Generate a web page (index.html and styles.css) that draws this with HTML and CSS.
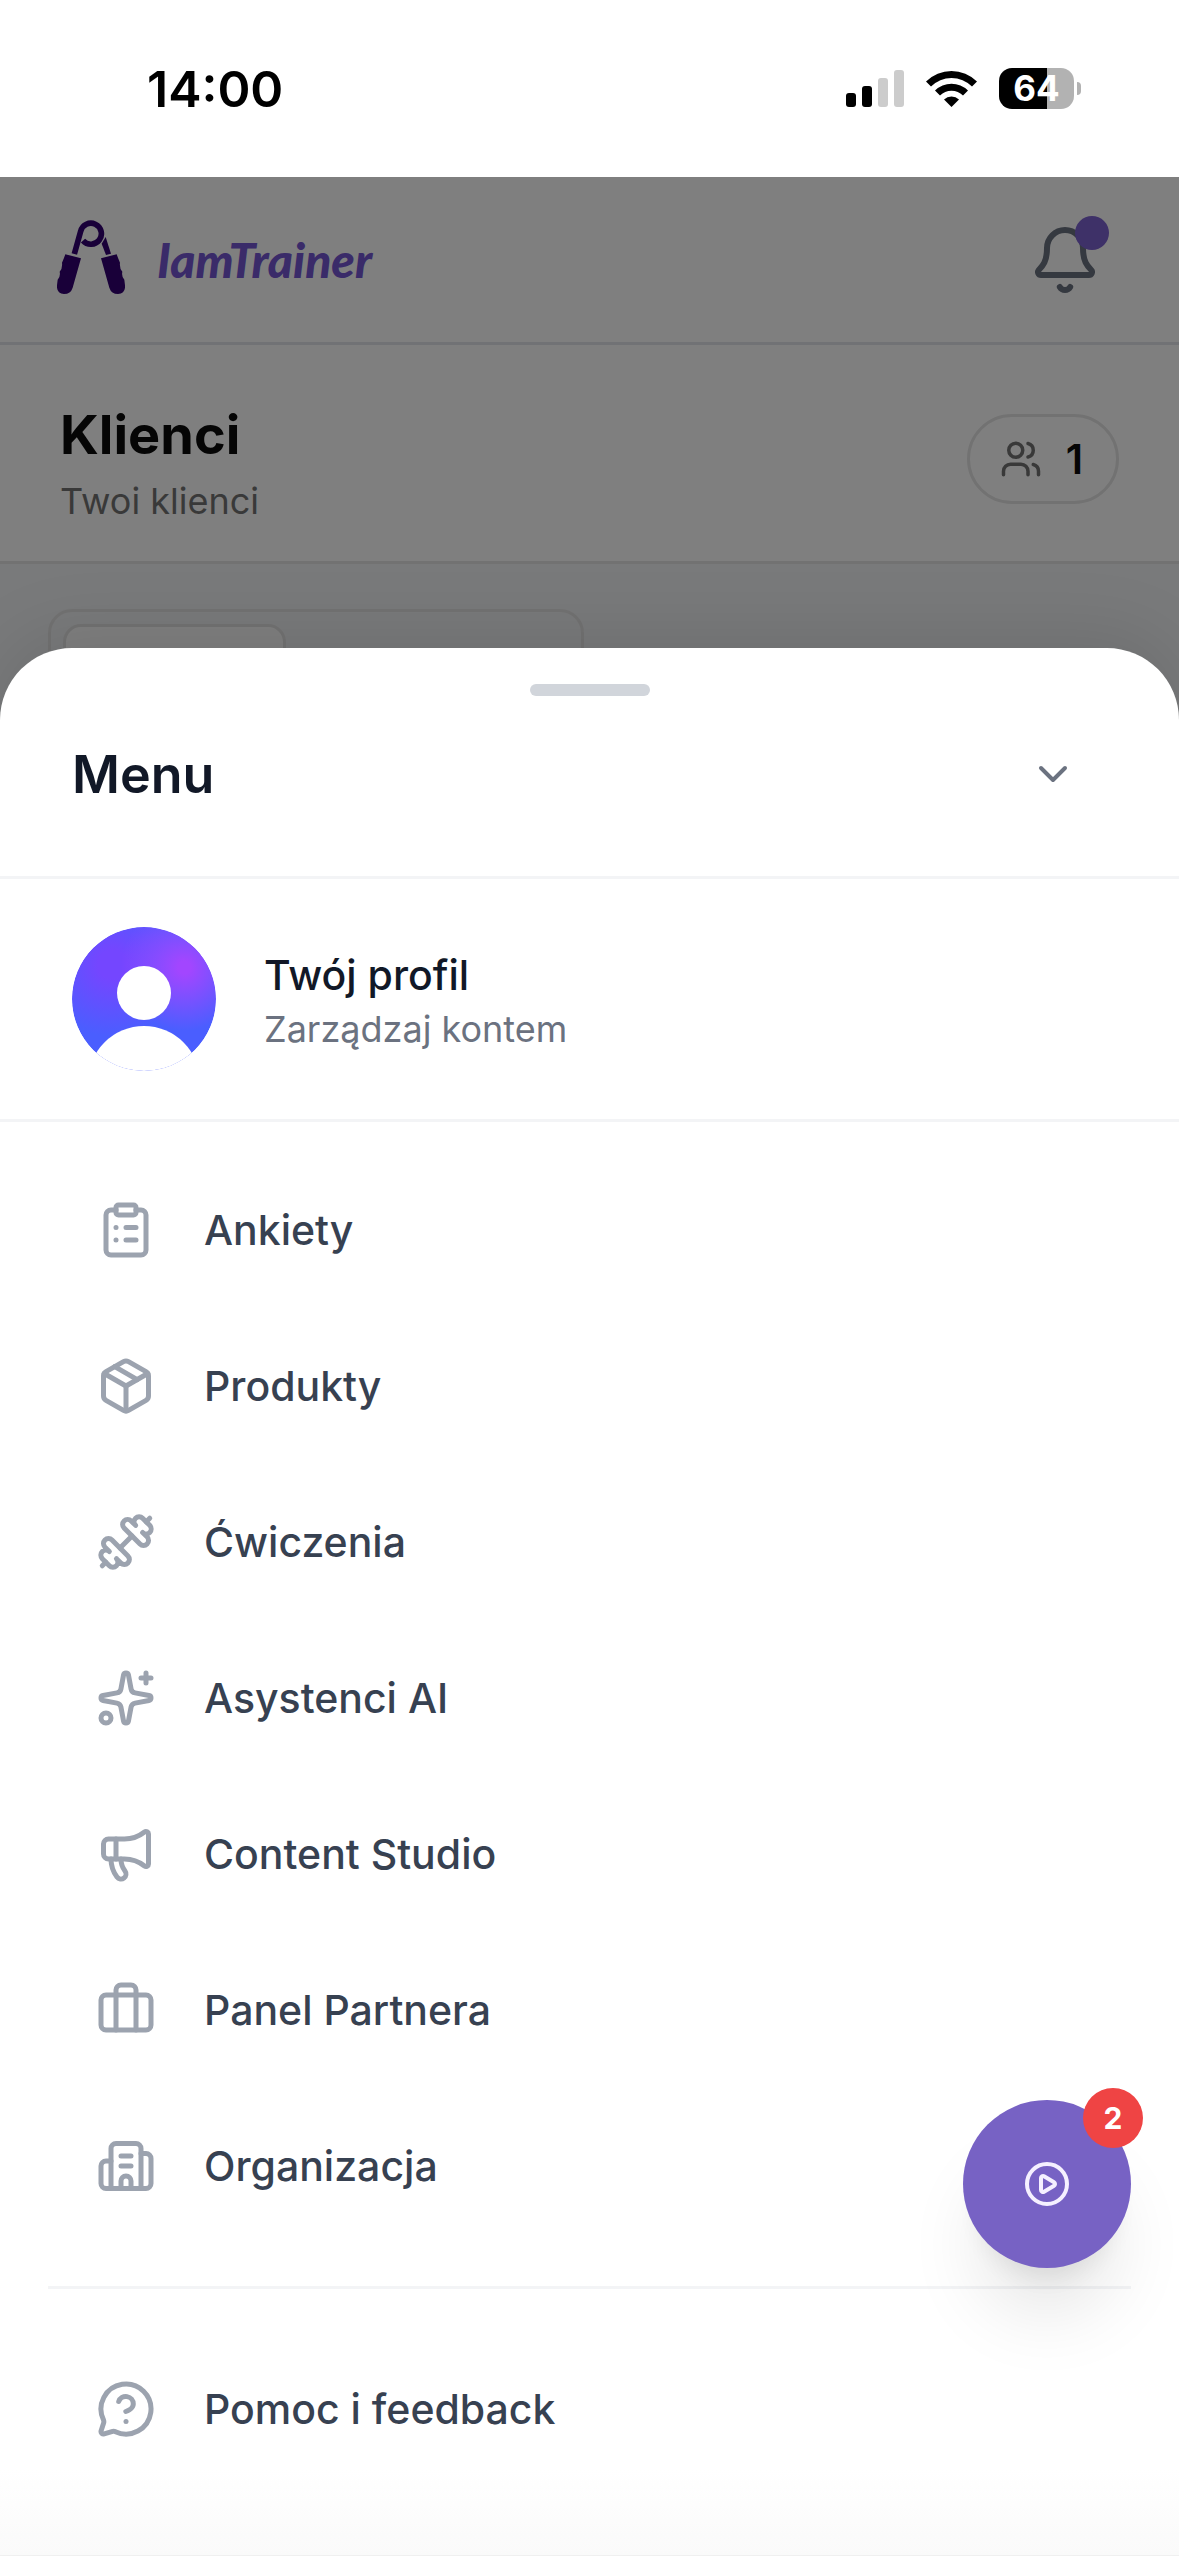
FILE: index.html
```html
<!DOCTYPE html>
<html lang="pl">
<head>
    <meta charset="UTF-8">
    <meta name="viewport" content="width=device-width, initial-scale=1.0">
    <title>IamTrainer - Klienci</title>
    <link rel="stylesheet" href="styles.css">
</head>
<body>

    <div class="status-bar">
        <span class="time">14:00</span>
        <div class="status-icons">
            <svg class="signal" viewBox="0 0 58 38" aria-hidden="true">
                <rect x="0" y="23" width="10" height="14" rx="3"/>
                <rect x="16" y="16" width="10" height="21" rx="3"/>
                <rect class="off" x="32" y="8" width="10" height="29" rx="3"/>
                <rect class="off" x="48" y="0" width="10" height="37" rx="3"/>
            </svg>
            <svg class="wifi" viewBox="0 0 51 38" aria-hidden="true">
                <path d="M0 11.5A36 36 0 0 1 51 11.5L46 16.5A29 29 0 0 0 5 16.5Z"/>
                <path d="M9 20.5A23.5 23.5 0 0 1 42 20.5L37 25.5A16.5 16.5 0 0 0 14 25.5Z"/>
                <path d="M18 29.5A11 11 0 0 1 33 29.5L25.5 37Z"/>
            </svg>
            <div class="battery">
                <span class="battery-level">64</span>
                <span class="battery-tip"></span>
            </div>
        </div>
    </div>

    <div class="app">
        <header class="header">
            <a class="brand" href="#">
                <svg class="logo" viewBox="81 87 204 222" aria-hidden="true">
                    <path class="logo-wire" d="M159 149A31.5 31.5 0 1 0 152 121L133 189"/>
                    <path d="M215 158L227 138L243 188L228 192Z"/>
                    <path d="M106 190L153 202L128 290Q122 309 102 309Q79 307 81 283L83 266Q92 257 89 242Q98 232 96 215Q102 202 106 190Z"/>
                    <path d="M260 190L213 202L238 290Q244 309 264 309Q287 307 285 283L283 266Q274 257 277 242Q268 232 270 215Q264 202 260 190Z"/>
                </svg>
                <span>IamTrainer</span>
            </a>
            <button class="bell" type="button" aria-label="Powiadomienia">
                <svg class="icon" viewBox="0 0 24 24">
                    <path d="M10.268 21a2 2 0 0 0 3.464 0"/>
                    <path d="M3.262 15.326A1 1 0 0 0 4 17h16a1 1 0 0 0 .74-1.673C19.41 13.956 18 12.499 18 8A6 6 0 0 0 6 8c0 4.499-1.411 5.956-2.738 7.326"/>
                </svg>
                <span class="bell-dot"></span>
            </button>
        </header>

        <section class="page-header">
            <div>
                <h1>Klienci</h1>
                <p>Twoi klienci</p>
            </div>
            <div class="counter">
                <svg class="icon" viewBox="0 0 24 24" aria-hidden="true">
                    <path d="M16 21v-2a4 4 0 0 0-4-4H6a4 4 0 0 0-4 4v2"/>
                    <circle cx="9" cy="7" r="4"/>
                    <path d="M22 21v-2a4 4 0 0 0-3-3.87"/>
                    <path d="M16 3.13a4 4 0 0 1 0 7.75"/>
                </svg>
                <span>1</span>
            </div>
        </section>

        <div class="content">
            <div class="tabs">
                <div class="tab-active"></div>
            </div>
        </div>

        <div class="overlay"></div>
    </div>

    <div class="sheet">
        <div class="handle"></div>
        <div class="sheet-header">
            <h2>Menu</h2>
            <button class="close" type="button" aria-label="Zamknij menu">
                <svg class="icon" viewBox="0 0 24 24"><path d="m6 9 6 6 6-6"/></svg>
            </button>
        </div>

        <a class="profile" href="#">
            <svg class="avatar" viewBox="0 0 144 144" aria-hidden="true">
                <defs>
                    <clipPath id="round"><circle cx="72" cy="72" r="72"/></clipPath>
                    <radialGradient id="violet" cx="0.28" cy="0.26" r="0.5">
                        <stop offset="0.2" stop-color="#7446ff"/>
                        <stop offset="1" stop-color="#7446ff" stop-opacity="0"/>
                    </radialGradient>
                    <radialGradient id="magenta" cx="0.78" cy="0.28" r="0.44">
                        <stop offset="0.1" stop-color="#a246ff"/>
                        <stop offset="1" stop-color="#a246ff" stop-opacity="0"/>
                    </radialGradient>
                </defs>
                <g clip-path="url(#round)">
                    <rect width="144" height="144" fill="#4a5eff"/>
                    <rect width="144" height="144" fill="url(#violet)"/>
                    <rect width="144" height="144" fill="url(#magenta)"/>
                    <circle cx="72" cy="66" r="27" fill="#fff"/>
                    <circle cx="72" cy="155" r="56" fill="#fff"/>
                </g>
            </svg>
            <span class="profile-text">
                <span class="profile-name">Twój profil</span>
                <span class="profile-sub">Zarządzaj kontem</span>
            </span>
        </a>

        <nav class="menu">
            <ul>
                <li><a href="#">
                    <svg class="icon" viewBox="0 0 24 24">
                        <rect width="8" height="4" x="8" y="2" rx="1"/>
                        <path d="M16 4h2a2 2 0 0 1 2 2v14a2 2 0 0 1-2 2H6a2 2 0 0 1-2-2V6a2 2 0 0 1 2-2h2"/>
                        <path d="M12 11h4M12 16h4M8 11h.01M8 16h.01"/>
                    </svg>
                    Ankiety
                </a></li>
                <li><a href="#">
                    <svg class="icon" viewBox="0 0 24 24">
                        <path d="M11 21.73a2 2 0 0 0 2 0l7-4A2 2 0 0 0 21 16V8a2 2 0 0 0-1-1.73l-7-4a2 2 0 0 0-2 0l-7 4A2 2 0 0 0 3 8v8a2 2 0 0 0 1 1.73z"/>
                        <path d="M12 22V12"/>
                        <path d="M3.29 7 12 12l8.71-5"/>
                        <path d="m7.5 4.27 9 5.15"/>
                    </svg>
                    Produkty
                </a></li>
                <li><a href="#">
                    <svg class="icon" viewBox="0 0 24 24">
                        <path d="M17.596 12.768a2 2 0 1 0 2.829-2.829l-1.768-1.767a2 2 0 0 0 2.828-2.829l-2.828-2.828a2 2 0 0 0-2.829 2.828l-1.767-1.768a2 2 0 1 0-2.829 2.829z"/>
                        <path d="m2.5 21.5 1.4-1.4"/>
                        <path d="m20.1 3.9 1.4-1.4"/>
                        <path d="M5.343 21.485a2 2 0 1 0 2.829-2.828l1.767 1.768a2 2 0 1 0 2.829-2.829l-6.364-6.364a2 2 0 1 0-2.829 2.829l1.768 1.767a2 2 0 0 0-2.828 2.829z"/>
                        <path d="m9.6 14.4 4.8-4.8"/>
                    </svg>
                    Ćwiczenia
                </a></li>
                <li><a href="#">
                    <svg class="icon" viewBox="0 0 24 24">
                        <path d="M11.017 2.814a1 1 0 0 1 1.966 0l1.051 5.558a2 2 0 0 0 1.594 1.594l5.558 1.051a1 1 0 0 1 0 1.966l-5.558 1.051a2 2 0 0 0-1.594 1.594l-1.051 5.558a1 1 0 0 1-1.966 0l-1.051-5.558a2 2 0 0 0-1.594-1.594l-5.558-1.051a1 1 0 0 1 0-1.966l5.558-1.051a2 2 0 0 0 1.594-1.594z"/>
                        <path d="M20 2v4M22 4h-4"/>
                        <circle cx="4" cy="20" r="2"/>
                    </svg>
                    Asystenci AI
                </a></li>
                <li><a href="#">
                    <svg class="icon" viewBox="0 0 24 24">
                        <path d="M11 6a13 13 0 0 0 8.4-2.8A1 1 0 0 1 21 4v12a1 1 0 0 1-1.6.8A13 13 0 0 0 11 14H5a2 2 0 0 1-2-2V8a2 2 0 0 1 2-2z"/>
                        <path d="M6 14a12 12 0 0 0 2.4 7.2 2 2 0 0 0 3.2-2.4A8 8 0 0 1 10 14"/>
                        <path d="M8 6v8"/>
                    </svg>
                    Content Studio
                </a></li>
                <li><a href="#">
                    <svg class="icon" viewBox="0 0 24 24">
                        <path d="M16 20V4a2 2 0 0 0-2-2h-4a2 2 0 0 0-2 2v16"/>
                        <rect width="20" height="14" x="2" y="6" rx="2"/>
                    </svg>
                    Panel Partnera
                </a></li>
                <li><a href="#">
                    <svg class="icon" viewBox="0 0 24 24">
                        <path d="M10 12h4M10 8h4"/>
                        <path d="M14 21v-3a2 2 0 0 0-4 0v3"/>
                        <path d="M6 10H4a2 2 0 0 0-2 2v7a2 2 0 0 0 2 2h16a2 2 0 0 0 2-2V9a2 2 0 0 0-2-2h-2"/>
                        <path d="M6 21V5a2 2 0 0 1 2-2h8a2 2 0 0 1 2 2v16"/>
                    </svg>
                    Organizacja
                </a></li>
            </ul>
            <ul class="menu-help">
                <li><a href="#">
                    <svg class="icon" viewBox="0 0 24 24">
                        <path d="M2.992 16.342a2 2 0 0 1 .094 1.167l-1.065 3.29a1 1 0 0 0 1.236 1.168l3.413-.998a2 2 0 0 1 1.099.092 10 10 0 1 0-4.777-4.719"/>
                        <path d="M9.09 9a3 3 0 0 1 5.83 1c0 2-3 3-3 3"/>
                        <path d="M12 17h.01"/>
                    </svg>
                    Pomoc i feedback
                </a></li>
            </ul>
        </nav>
        <div class="sheet-fade"></div>
    </div>

    <button class="fab" type="button" aria-label="Samouczki">
        <svg class="icon" viewBox="0 0 24 24">
            <path d="M9 9.003a1 1 0 0 1 1.517-.859l4.997 2.997a1 1 0 0 1 0 1.718l-4.997 2.997A1 1 0 0 1 9 14.996z"/>
            <circle cx="12" cy="12" r="10"/>
        </svg>
        <span class="fab-badge">2</span>
    </button>

</body>
</html>
```

FILE: styles.css
```css
* {
    box-sizing: border-box;
}
body {
    margin: 0;
    min-height: 100vh;
    display: flex;
    flex-direction: column;
    position: relative;
    font-family: Inter, "Liberation Sans", sans-serif;
    background: #fff;
    color: #111827;
}
h1, h2, p, ul {
    margin: 0;
    padding: 0;
}
ul {
    list-style: none;
}
a {
    color: inherit;
    text-decoration: none;
}
button {
    padding: 0;
    border: none;
    background: none;
    font-family: inherit;
    cursor: pointer;
}
.icon {
    display: block;
    flex-shrink: 0;
    fill: none;
    stroke: currentColor;
    stroke-width: 2;
    stroke-linecap: round;
    stroke-linejoin: round;
}

/* status bar */
.status-bar {
    height: 177px;
    display: flex;
    align-items: center;
    justify-content: space-between;
    padding: 0 98px 0 147px;
    color: #000;
}
.time {
    font-size: 50px;
    font-weight: 600;
}
.status-icons {
    display: flex;
    align-items: center;
    gap: 22px;
}
.signal {
    width: 58px;
    height: 38px;
}
.signal .off {
    fill: #ccc;
}
.wifi {
    width: 51px;
    height: 38px;
}
.battery {
    display: flex;
    align-items: center;
    gap: 3px;
}
.battery-level {
    width: 75px;
    height: 41px;
    border-radius: 13px;
    background: linear-gradient(to right, #000 64%, #b2b2b2 64%);
    color: #fff;
    font-size: 35px;
    font-weight: 700;
    line-height: 41px;
    text-align: center;
}
.battery-tip {
    width: 4px;
    height: 13px;
    border-radius: 0 4px 4px 0;
    background: #b2b2b2;
}

/* app behind the menu */
.app {
    flex: 1;
    position: relative;
    background: #f3f4f6;
}
.overlay {
    position: absolute;
    inset: 0;
    background: rgba(0, 0, 0, 0.5);
}
.header {
    height: 168px;
    display: flex;
    align-items: center;
    justify-content: space-between;
    padding: 0 78px 0 57px;
    background: #fff;
    border-bottom: 3px solid #e2e5ea;
}
.brand {
    display: flex;
    align-items: center;
    gap: 32px;
    color: #7456d2;
    font-family: Lato, sans-serif;
    font-size: 48px;
    font-weight: 900;
    font-style: italic;
}
.logo {
    width: 68px;
    height: 74px;
    margin-bottom: 6px;
    fill: #320072;
}
.logo-wire {
    fill: none;
    stroke: #320072;
    stroke-width: 17;
}
.bell {
    position: relative;
    color: #6b7280;
}
.bell .icon {
    width: 72px;
    height: 72px;
}
.bell-dot {
    position: absolute;
    top: -8px;
    right: -8px;
    width: 34px;
    height: 34px;
    border-radius: 50%;
    background: #7c62d0;
}
.page-header {
    display: flex;
    align-items: center;
    justify-content: space-between;
    padding: 48px 60px 36px;
    background: #fff;
    border-bottom: 3px solid #e5e5e5;
}
.page-header h1 {
    color: #0a0a0a;
    font-size: 54px;
    font-weight: 700;
    line-height: 84px;
}
.page-header p {
    color: #737373;
    font-size: 36px;
    line-height: 48px;
}
.counter {
    display: flex;
    align-items: center;
    gap: 24px;
    height: 90px;
    padding: 0 33px 0 30px;
    border: 3px solid #e5e5e5;
    border-radius: 45px;
    color: #0a0a0a;
    font-size: 41px;
    font-weight: 600;
}
.counter .icon {
    width: 42px;
    height: 42px;
    color: #737373;
}
.content {
    padding: 45px 48px;
}
.tabs {
    max-width: 536px;
    padding: 12px;
    border: 3px solid #e5e5e5;
    border-radius: 24px;
}
.tab-active {
    width: 44%;
    height: 96px;
    border: 3px solid #e5e5e5;
    border-radius: 18px;
    background: #fff;
}

/* bottom sheet */
.sheet {
    position: absolute;
    left: 0;
    right: 0;
    bottom: 0;
    padding-top: 36px;
    background: #fff;
    border-radius: 72px 72px 0 0;
    box-shadow: 0 -12px 75px rgba(0, 0, 0, 0.1);
}
.handle {
    width: 120px;
    height: 12px;
    margin: 0 auto;
    border-radius: 6px;
    background: #d1d5db;
}
.sheet-header {
    display: flex;
    align-items: center;
    justify-content: space-between;
    padding: 24px 72px 48px;
    border-bottom: 3px solid #f3f4f6;
}
.sheet-header h2 {
    font-size: 52px;
    font-weight: 600;
}
.close {
    display: flex;
    align-items: center;
    justify-content: center;
    width: 108px;
    height: 108px;
    color: #6b7280;
}
.close .icon {
    width: 48px;
    height: 48px;
}
.profile {
    display: flex;
    align-items: center;
    gap: 48px;
    padding: 48px 72px;
    border-bottom: 3px solid #f3f4f6;
}
.avatar {
    width: 144px;
    height: 144px;
    border-radius: 50%;
}
.profile-text {
    display: flex;
    flex-direction: column;
    padding-top: 6px;
}
.profile-name {
    font-size: 41px;
    font-weight: 500;
    line-height: 54px;
}
.profile-sub {
    color: #6b7280;
    font-size: 36px;
    line-height: 54px;
}
.menu {
    padding: 48px 48px 0;
}
.menu ul {
    display: flex;
    flex-direction: column;
    gap: 36px;
}
.menu a {
    display: flex;
    align-items: center;
    gap: 48px;
    height: 120px;
    padding: 0 48px;
    color: #374151;
    font-size: 41px;
    font-weight: 500;
}
.menu .icon {
    width: 60px;
    height: 60px;
    color: #9ca3af;
}
.menu .menu-help {
    margin-top: 60px;
    padding-top: 60px;
    border-top: 3px solid #f3f4f6;
}
.sheet-fade {
    height: 87px;
    background: linear-gradient(#fff, #fafafa);
    border-bottom: 1px solid #f0f0f0;
}

/* floating button */
.fab {
    position: fixed;
    right: 48px;
    bottom: 288px;
    display: flex;
    align-items: center;
    justify-content: center;
    width: 168px;
    height: 168px;
    border-radius: 50%;
    background: #7762c4;
    color: #f5f0ff;
    box-shadow: 0 60px 75px -15px rgba(0, 0, 0, 0.1), 0 24px 30px -18px rgba(0, 0, 0, 0.1);
}
.fab .icon {
    width: 48px;
    height: 48px;
}
.fab-badge {
    position: absolute;
    top: -12px;
    right: -12px;
    width: 60px;
    height: 60px;
    border-radius: 50%;
    background: #ef4444;
    color: #fff;
    font-size: 30px;
    font-weight: 700;
    line-height: 60px;
    text-align: center;
}
```
